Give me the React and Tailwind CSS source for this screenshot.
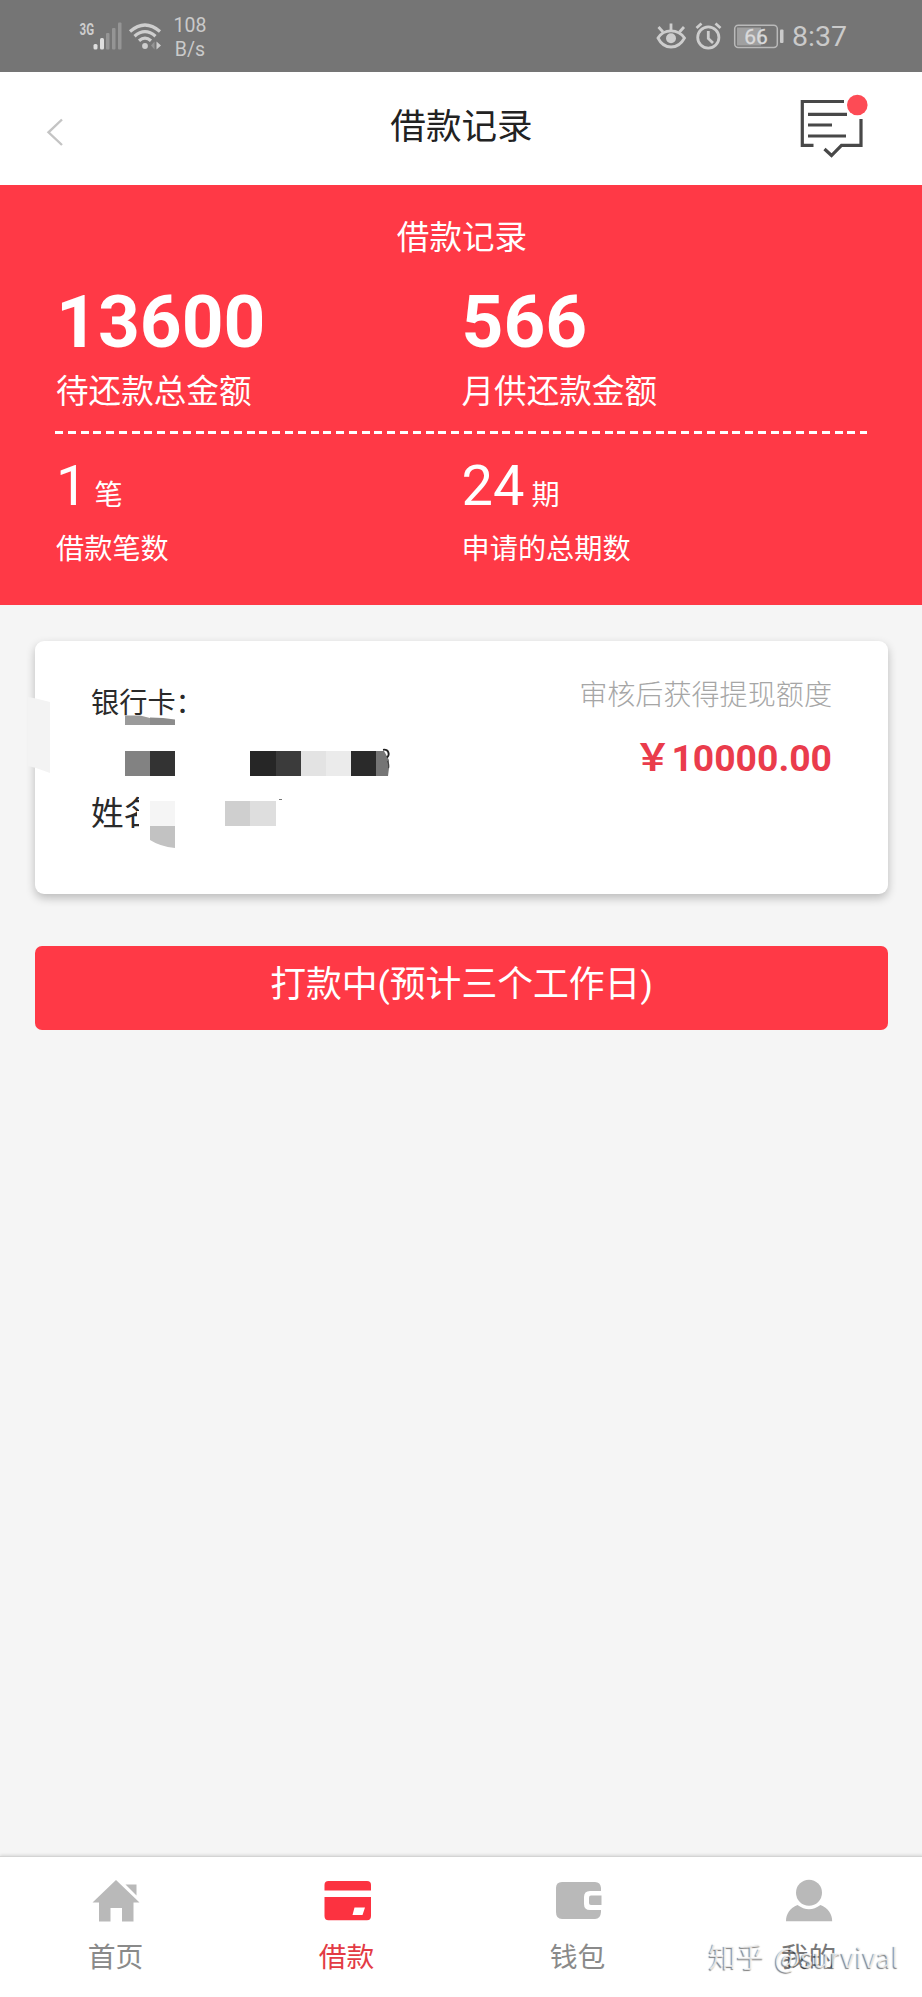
const FONT = "font-['Roboto','Noto_Sans_CJK_SC',sans-serif]";

function StatusBar() {
  return (
    <div className="flex h-[72px] shrink-0 justify-between bg-[#757575] text-[#cacaca]">
      <div className="flex pl-[78px]">
        <svg width="46" height="72" viewBox="78 0 46 72" fill="#cdcdcd">
          <text x="79.500" y="34.500" fontFamily="Roboto, sans-serif" fontSize="16.500" fontWeight="700" textLength="14.500" lengthAdjust="spacingAndGlyphs">3G</text>
          <rect x="93.500" y="44" width="4" height="5.500" rx="1.500" fill="#dedede" />
          <rect x="100" y="38" width="4" height="11.500" rx="1.500" fill="#dedede" />
          <rect x="106" y="33" width="3.500" height="16.500" rx="1" fill="#959595" />
          <rect x="112" y="28" width="3.500" height="21.500" rx="1" fill="#959595" />
          <rect x="118" y="22.500" width="3.500" height="27" rx="1" fill="#959595" />
        </svg>
        <svg width="40" height="72" viewBox="124 0 40 72" fill="none" stroke="#cecece" strokeWidth="3.200">
          <path d="M130 31.500 Q145 18.500 160 31.500" />
          <path d="M134.500 36.200 Q145 27 155.500 36.200" />
          <path d="M139 40.800 Q145 35.600 151 40.800" />
          <circle cx="145" cy="46" r="2.900" fill="#cecece" stroke="none" />
          <path d="M154.500 41.500 L151 45.500 L154.500 49.500Z" fill="#959595" stroke="none" />
          <path d="M156.500 41.500 L161 45.500 L156.500 49.500Z" fill="#cecece" stroke="none" />
        </svg>
        <div className="ml-[8px] flex w-[36px] flex-col items-center pt-[14px] text-[19.500px] leading-[23.500px]">
          <span>108</span>
          <span>B/s</span>
        </div>
      </div>
      <div className="flex pr-[75px]">
        <svg width="32" height="72" viewBox="655 0 32 72" fill="none" stroke="#cdcdcd" strokeWidth="2.800">
          <path d="M658 38 C664 28.500 678 28.500 684.500 38 C678 50 664 50 658 38Z" />
          <circle cx="671" cy="38.300" r="5" fill="#cdcdcd" stroke="none" />
          <path d="M671 30.500 V23.500 M663 32 L658.500 27 M679.500 32 L684 27" />
        </svg>
        <svg width="40" height="72" viewBox="687 0 40 72" fill="none" stroke="#cdcdcd" strokeWidth="2.800">
          <circle cx="708.300" cy="37.500" r="10.600" />
          <path d="M708.300 31 V38.500 L713 43 M696.500 28 L701.500 23.500 M720.500 28 L715.500 23.500" />
        </svg>
        <svg width="62" height="72" viewBox="727 0 62 72">
          <rect x="737" y="27.500" width="24" height="18" fill="#a0a0a0" />
          <rect x="734.700" y="25.200" width="42.600" height="22.300" rx="3.500" fill="none" stroke="#b9b9b9" strokeWidth="1.500" />
          <rect x="780" y="29.500" width="3.500" height="13.500" rx="1" fill="#cacaca" />
          <text x="756" y="43.500" fontFamily="Roboto, sans-serif" fontSize="21" fill="#dadada" stroke="#dadada" strokeWidth="0.300" textAnchor="middle">66</text>
        </svg>
        <span className="ml-[3px] pt-px text-[28.500px] leading-[72px]">8:37</span>
      </div>
    </div>
  );
}

function Header() {
  return (
    <header className="flex h-[113px] shrink-0 items-start bg-white">
      <svg width="125" height="113" viewBox="0 72 125 113" fill="none" stroke="#c4c4c4" strokeWidth="2.400">
        <path d="M62 119.500 L48.500 132.300 L62 145" />
      </svg>
      <h1 className="grow pl-px text-center text-[35.600px] leading-[110px] text-[#222]">借款记录</h1>
      <svg width="125" height="113" viewBox="797 72 125 113" fill="none" stroke="#484848" strokeWidth="3.200">
        <path d="M844 101.500 H802.300 V145.300 H813.500" />
        <path d="M861 119 V145.300 H841.500 L831.500 155.500 L824.500 149" />
        <path d="M808 114.300 H847 M808 125 H832 M808 136 H846" />
        <circle cx="857.300" cy="105" r="10.300" fill="#fd4b55" stroke="none" />
      </svg>
    </header>
  );
}

function Total({ value, label }) {
  return (
    <div className="w-1/2">
      <div className="text-[73px] leading-[76px] font-bold">{value}</div>
      <div className="mt-3 text-[32.600px] leading-10">{label}</div>
    </div>
  );
}

function Count({ value, unit, label }) {
  return (
    <div className="w-1/2">
      <div className="h-[60px] text-[56px] leading-[60px]">
        {value}
        <span className="text-[28.200px]"> {unit}</span>
      </div>
      <div className="mt-4 text-[28.200px] leading-9">{label}</div>
    </div>
  );
}

function Summary() {
  return (
    <section className="h-[420px] shrink-0 bg-[#ff3946] px-[55px] pt-[31px] text-white">
      <h2 className="pl-[2px] text-center text-[32.600px] leading-[44px]">借款记录</h2>
      <div className="mt-6 flex pl-px">
        <Total value="13600" label="待还款总金额" />
        <Total value="566" label="月供还款金额" />
      </div>
      <div className="mt-[19px] h-[3px] bg-[repeating-linear-gradient(90deg,#fff_0_8px,transparent_8px_12.780px)]" />
      <div className="mt-[22px] flex pl-px">
        <Count value="1" unit="笔" label="借款笔数" />
        <Count value="24" unit="期" label="申请的总期数" />
      </div>
    </section>
  );
}

function Redaction() {
  return (
    <svg className="absolute top-0 -left-[10px]" width="420" height="253" viewBox="25 641 420 253" aria-hidden="true">
      <path d="M28 697 L36 698.500 L50 702 V773 L36 768 L28 766Z" fill="#f3f3f3" />
      <path d="M125 715.500 H140 L150 718 V725 H125Z" fill="#9b9b9b" />
      <path d="M150 717.500 L163 718 L175 719.500 V725 H150Z" fill="#8c8c8c" />
      <rect x="125" y="751" width="25" height="25" fill="#828282" />
      <rect x="150" y="751" width="25" height="25" fill="#333" />
      <rect x="250" y="751" width="26" height="25" fill="#262626" />
      <rect x="276" y="751" width="25" height="25" fill="#3b3b3b" />
      <rect x="301" y="751" width="25" height="25" fill="#e3e3e3" />
      <rect x="326" y="751" width="25" height="25" fill="#ebebeb" />
      <rect x="351" y="751" width="25" height="25" fill="#2a2a2a" />
      <path d="M376 751 H384 L389 760 V768 L388 776 H376Z" fill="#757575" />
      <path d="M383 749.800 C389 749 390 755 387 757.500" fill="none" stroke="#222" strokeWidth="1.800" />
      <path d="M387.500 761 C389 764 389 766 388.500 768" fill="none" stroke="#444" strokeWidth="1.200" />
      <rect x="139" y="795" width="11" height="38" fill="#fff" />
      <rect x="137" y="811" width="3" height="6" fill="#fff" />
      <rect x="150" y="796" width="25" height="30" fill="#fff" />
      <rect x="150" y="801" width="25" height="25" fill="#f5f5f5" />
      <path d="M150 826 H175 V848 Q160 846.500 150 840Z" fill="#c2c2c2" />
      <rect x="225" y="801" width="25" height="25" fill="#cfcfcf" />
      <rect x="250" y="801" width="26" height="25" fill="#dedede" />
      <rect x="279" y="799" width="3" height="1" fill="#777" />
    </svg>
  );
}

function LoanCard() {
  return (
    <section className="relative mx-[35px] mt-9 flex h-[253px] w-[853px] shrink-0 justify-between rounded-[9px] bg-white pr-[56px] pl-[56px] shadow-[0_4px_10px_rgba(0,0,0,0.24)]">
      <div className="pt-[43px] text-[#2a2a2a]">
        <div className="text-[28.200px] leading-10">银行卡：</div>
        <div className="mt-[70px] text-[32.600px] leading-10">姓名</div>
      </div>
      <div className="pt-[35px] text-right">
        <div className="text-[28.100px] leading-10 font-light text-[#a6a6a6]">审核后获得提现额度</div>
        <div className="mt-[19px] text-[37.300px] leading-[46px] font-bold text-[#ea3c4c]">￥10000.00</div>
      </div>
      <Redaction />
    </section>
  );
}

const TABS = [
  {
    label: "首页",
    color: "text-[#8a8a8a]",
    icon: (
      <g fill="#b9b9b9">
        <path d="M24 0 L47.500 22.500 H41.500 V41.500 H30 V28 H18.500 V41.500 H7 V22.500 H0.500Z" />
        <path d="M33.500 4.500 H44.500 V15.500Z" />
      </g>
    ),
  },
  {
    label: "借款",
    color: "text-[#e33b45]",
    icon: (
      <g fill="#fc3240">
        <path d="M1.500 10.500 V5 Q1.500 1 5.500 1 H44 Q48 1 48 5 V10.500Z" />
        <path fillRule="evenodd" d="M1.500 17 H48 V36 Q48 40.200 44 40.200 H5.500 Q1.500 40.200 1.500 36Z M31.500 27.500 L29.500 35 H39.500 L42 27.500Z" />
      </g>
    ),
  },
  {
    label: "钱包",
    color: "text-[#8a8a8a]",
    icon: (
      <g fill="#b9b9b9">
        <path d="M8 2 H41 Q46.500 2 47 8 V11 H36 Q30 11 30 17 V24 Q30 30 36 30 H47 V32 Q46.500 39 41 39 H8 Q2 39 2 32 V8 Q2 2 8 2Z" />
        <path d="M37 15.500 H47.500 V25 H37 Q35 25 35 23 V17.500 Q35 15.500 37 15.500Z" />
      </g>
    ),
  },
  {
    label: "我的",
    color: "text-[#777]",
    icon: (
      <g fill="#b9b9b9">
        <circle cx="24" cy="12.700" r="13" />
        <path d="M12.500 25 Q24 33.500 35.500 25 C43 28 47.200 34 47.200 41.300 H1 C1 34 5 28 12.500 25Z" />
      </g>
    ),
  },
];

function TabBar() {
  return (
    <nav className="relative mt-auto flex h-[141px] w-[924px] shrink-0 border-t border-[#d4d4d4] bg-white shadow-[0_-1px_3px_rgba(0,0,0,0.12)]">
      {TABS.map((tab) => (
        <div key={tab.label} className="flex flex-1 flex-col items-center pt-[23px]">
          <svg width="48" height="42" viewBox="0 0 48 42" className="overflow-visible">
            {tab.icon}
          </svg>
          <span className={`mt-[16px] text-[27.800px] leading-10 ${tab.color}`}>{tab.label}</span>
        </div>
      ))}
      <div className="absolute right-[25px] bottom-[20px] flex gap-[10px] font-['Noto_Sans_CJK_SC',sans-serif] text-[28px] leading-[42px] whitespace-nowrap text-white/75 [text-shadow:-1px_1px_1px_rgba(0,0,0,0.5)]">
        <span>知乎</span>
        <span className="text-[27.200px]">@survival</span>
      </div>
    </nav>
  );
}

export default function App() {
  return (
    <div lang="zh-CN" className={`flex h-[1997px] w-[922px] flex-col overflow-hidden bg-[#f5f5f5] ${FONT}`}>
      <StatusBar />
      <Header />
      <Summary />
      <LoanCard />
      <button className="mx-[35px] mt-[52px] h-[84px] w-[853px] shrink-0 rounded-[7px] bg-[#ff3946] pb-[6px] text-[35.800px] leading-[78px] text-white">
        打款中(预计三个工作日)
      </button>
      <TabBar />
    </div>
  );
}
